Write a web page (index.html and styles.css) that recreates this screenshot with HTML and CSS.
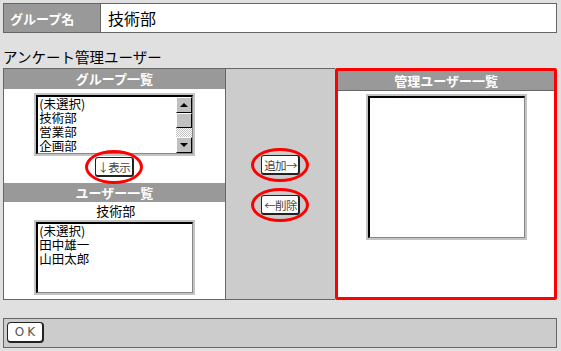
FILE: index.html
```html
<!DOCTYPE html>
<html lang="ja">
<head>
<meta charset="utf-8">
<title>アンケート管理ユーザー</title>
<link rel="stylesheet" href="styles.css">
</head>
<body>
<div class="page">
  <div class="namebar">
    <div class="namebar-label">グループ名</div>
    <div class="namebar-value">技術部</div>
  </div>
  <div class="heading">アンケート管理ユーザー</div>
  <div class="main">
    <div class="col col-left">
      <div class="col-head">グループ一覧</div>
      <div class="listbox listbox-groups">
        <div class="listbox-inner">
          <div class="items">
            <div>(未選択)</div>
            <div>技術部</div>
            <div>営業部</div>
            <div>企画部</div>
          </div>
          <div class="scrollbar">
            <div class="sb-btn"><span class="tri-up"></span></div>
            <div class="sb-thumb"></div>
            <div class="sb-track"></div>
            <div class="sb-btn"><span class="tri-down"></span></div>
          </div>
        </div>
      </div>
      <div class="btn-row">
        <span class="btn-wrap">
          <button class="btn">↓表示</button>
          <span class="mark"></span>
        </span>
      </div>
      <div class="col-head col-head-users">ユーザー一覧</div>
      <div class="sub-label">技術部</div>
      <div class="listbox listbox-users">
        <div class="listbox-inner">
          <div class="items">
            <div>(未選択)</div>
            <div>田中雄一</div>
            <div>山田太郎</div>
          </div>
        </div>
      </div>
    </div>
    <div class="col col-mid">
      <span class="btn-wrap">
        <button class="btn">追加→</button>
        <span class="mark"></span>
      </span>
      <span class="btn-wrap">
        <button class="btn">←削除</button>
        <span class="mark"></span>
      </span>
    </div>
    <div class="col col-right">
      <div class="col-head col-head-right">管理ユーザー一覧</div>
      <div class="listbox listbox-admins">
        <div class="listbox-inner"></div>
      </div>
    </div>
  </div>
  <div class="okbar">
    <button class="btn btn-ok">OK</button>
  </div>
</div>
</body>
</html>
```
FILE: styles.css
```css
* { box-sizing: border-box; }
html, body { margin: 0; padding: 0; }
body {
  background: #e0e0e0;
  font-family: "Noto Sans CJK JP", "Noto Sans", sans-serif;
  color: #000;
  width: 561px;
  height: 351px;
  overflow: hidden;
}
.page { padding: 3px 4px 0 3px; }

.namebar {
  display: flex;
  height: 30px;
  border: 1px solid #666;
  background: #fff;
}
.namebar-label {
  width: 97px;
  background: #999;
  border-right: 1px solid #666;
  color: #fff;
  font-weight: bold;
  font-size: 13px;
  display: flex;
  align-items: center;
  padding-left: 6px;
}
.namebar-value {
  font-size: 16px;
  display: flex;
  align-items: center;
  padding-left: 7px;
}

.heading {
  height: 35px;
  font-size: 14.5px;
  display: flex;
  align-items: flex-end;
  line-height: 20px;
  padding-bottom: 1px;
}

.main {
  display: flex;
  height: 232px;
}
.col { height: 100%; }
.col-left {
  width: 223px;
  border: 1px solid #666;
  background: #fff;
  display: flex;
  flex-direction: column;
  align-items: center;
}
.col-mid {
  width: 110px;
  background: #ccc;
  border-top: 1px solid #666;
  border-bottom: 1px solid #666;
  display: flex;
  flex-direction: column;
  align-items: center;
  padding-top: 86px;
  padding-left: 1px;
  gap: 20px;
}
.col-right {
  width: 222px;
  border: 3px solid #f00;
  border-radius: 2px;
  background: #fff;
  display: flex;
  flex-direction: column;
  align-items: center;
}

.col-head {
  width: 100%;
  height: 20px;
  background: #999;
  color: #fff;
  font-weight: bold;
  font-size: 13px;
  line-height: 20px;
  text-align: center;
  flex: none;
}
.col-head-users { margin-top: 6px; height: 19px; line-height: 19px; }
.col-head-right { height: 20px; line-height: 19px; border-bottom: 1px solid #666; }

.listbox {
  border: 2px solid #c4c4c4;
  background: #fff;
  flex: none;
}
.listbox-inner {
  height: 100%;
  border-top: 2px solid #000;
  border-left: 2px solid #000;
  border-right: 1px solid #888;
  border-bottom: 1px solid #888;
  display: flex;
  overflow: hidden;
}
.listbox-groups { width: 161px; height: 63px; margin-top: 4px; margin-left: 1px; }
.listbox-users { width: 161px; height: 75px; margin-left: 1px; }
.listbox-admins { width: 161px; height: 146px; margin-top: 3px; }

.items {
  flex: 1;
  font-size: 12.5px;
  line-height: 14px;
  padding-left: 1px;
  padding-top: 0;
  white-space: nowrap;
}

.scrollbar {
  width: 16px;
  display: flex;
  flex-direction: column;
}
.sb-btn {
  height: 16px;
  background: #c0c0c0;
  border-top: 1px solid #fff;
  border-left: 1px solid #fff;
  border-right: 1px solid #000;
  border-bottom: 1px solid #000;
  display: flex;
  align-items: center;
  justify-content: center;
  flex: none;
}
.sb-thumb {
  height: 15px;
  background: #c0c0c0;
  border-top: 1px solid #fff;
  border-left: 1px solid #fff;
  border-right: 1px solid #000;
  border-bottom: 1px solid #000;
  flex: none;
}
.sb-track {
  flex: 1;
  background: repeating-conic-gradient(#fff 0 25%, #c0c0c0 0 50%) 0 0 / 2px 2px;
}
.tri-up, .tri-down {
  width: 0; height: 0;
  border-left: 4px solid transparent;
  border-right: 4px solid transparent;
}
.tri-up { border-bottom: 4px solid #000; }
.tri-down { border-top: 4px solid #000; }

.btn-row { margin-top: 1px; height: 20px; display: flex; justify-content: center; width: 100%; }

.btn-wrap { position: relative; display: inline-block; }
.btn {
  display: block;
  width: 39px;
  height: 20px;
  padding: 0;
  margin: 0;
  background: #fff;
  border: 1px solid #222;
  border-right-width: 2px;
  border-bottom-width: 2px;
  border-radius: 3px;
  font-family: "Noto Sans CJK JP", "Noto Sans", sans-serif;
  font-size: 11.5px;
  letter-spacing: -0.6px;
  line-height: 16px;
  white-space: nowrap;
  overflow: hidden;
  color: #444;
  text-align: center;
}
.mark {
  position: absolute;
  top: -7px; bottom: -7px; left: -10px; right: -9px;
  border: 3px solid #f00;
  border-radius: 50%;
  pointer-events: none;
}

.sub-label {
  font-size: 13px;
  line-height: 18px;
  height: 18px;
  padding-left: 3px;
}

.okbar {
  margin-top: 18px;
  height: 30px;
  background: #ccc;
  border: 1px solid #666;
  padding: 3px 0 0 3px;
}
.btn-ok {
  width: 37px;
  height: 21px;
  font-family: "DejaVu Sans", sans-serif;
  font-size: 12px;
  letter-spacing: 3px;
  padding-left: 3px;
  color: #555;
  border-radius: 4px;
}
```
